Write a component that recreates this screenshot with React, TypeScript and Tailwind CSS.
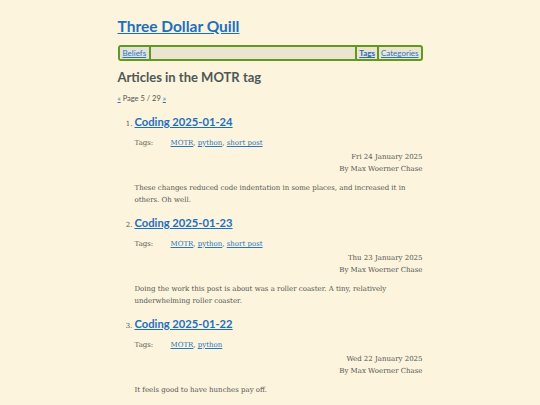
const posts = [
  {
    title: "Coding 2025-01-24",
    tags: ["MOTR", "python", "short post"],
    date: "Fri 24 January 2025",
    summary:
      "These changes reduced code indentation in some places, and increased it in others. Oh well.",
  },
  {
    title: "Coding 2025-01-23",
    tags: ["MOTR", "python", "short post"],
    date: "Thu 23 January 2025",
    summary:
      "Doing the work this post is about was a roller coaster. A tiny, relatively underwhelming roller coaster.",
  },
  {
    title: "Coding 2025-01-22",
    tags: ["MOTR", "python"],
    date: "Wed 22 January 2025",
    summary: "It feels good to have hunches pay off.",
  },
];

const sans = "font-['Lato','Open_Sans',sans-serif]";
const serif = "font-['DejaVu_Serif','Liberation_Serif',serif]";

function NavBar() {
  return (
    <nav className="mt-[7px] flex h-[16px] items-stretch rounded-[3px] border-2 border-[#5f9a1f] bg-[#ebe4d1] text-[8px] leading-none">
      <a href="#" className="flex items-center bg-[#e3e2da] px-[3px] text-[#2a75c0] underline">
        Beliefs
      </a>
      <div className="w-[2px] bg-[#5f9a1f]" />
      <div className="flex-1" />
      <div className="w-[2px] bg-[#5f9a1f]" />
      <a href="#" className="flex items-center px-[2px] font-bold text-[#2a6ab0] underline">
        Tags
      </a>
      <div className="w-[2px] bg-[#5f9a1f]" />
      <a href="#" className="flex items-center px-[2px] text-[#2a75c0] underline">
        Categories
      </a>
    </nav>
  );
}

export default function App() {
  return (
    <div className="min-h-[405px] w-[540px] overflow-hidden bg-[#fcf4dc]">
      <div className={`mx-auto w-[305px] pt-[14px] ${sans}`}>
        <h1 className="text-[15.5px] font-bold leading-[24px]">
          <a href="#" className="text-[#1d6fc2] underline">
            Three Dollar Quill
          </a>
        </h1>
        <NavBar />
        <h2 className="mt-[7px] text-[13px] font-bold leading-[18px] text-[#4d5858]">
          Articles in the MOTR tag
        </h2>
        <div className="mt-[8px] text-[7.5px] leading-[10px] text-[#555]">
          <a href="#" className="text-[#2a75c0] underline">«</a> Page 5 / 29{" "}
          <a href="#" className="text-[#2a75c0] underline">»</a>
        </div>
        <ol className="mt-[10px] pl-[17px]">
          {posts.map((p, i) => (
            <li key={p.title} className="flex h-[101px] flex-col">
              <div className="flex items-baseline">
                <span className={`-ml-[9px] w-[9px] pr-[2px] text-right text-[7px] text-[#555] ${serif}`}>
                  {i + 1}.
                </span>
                <a href="#" className="text-[11.2px] font-bold leading-[16px] text-[#1d6fc2] underline">
                  {p.title}
                </a>
              </div>
              <div className={`mt-[8px] flex text-[7px] leading-[10px] text-[#5a5a5a] ${serif}`}>
                <span className="w-[36px]">Tags:</span>
                <span>
                  {p.tags.map((t, j) => (
                    <span key={t}>
                      <a href="#" className="text-[#2a75c0] underline">
                        {t}
                      </a>
                      {j < p.tags.length - 1 ? ", " : ""}
                    </span>
                  ))}
                </span>
              </div>
              <div className={`mt-[3px] text-right text-[7px] leading-[12px] text-[#555] ${serif}`}>
                <div>{p.date}</div>
                <div>By Max Woerner Chase</div>
              </div>
              <p className={`mt-[7px] pr-[12px] text-[7px] leading-[12px] text-[#555] ${serif}`}>
                {p.summary}
              </p>
            </li>
          ))}
        </ol>
      </div>
    </div>
  );
}
